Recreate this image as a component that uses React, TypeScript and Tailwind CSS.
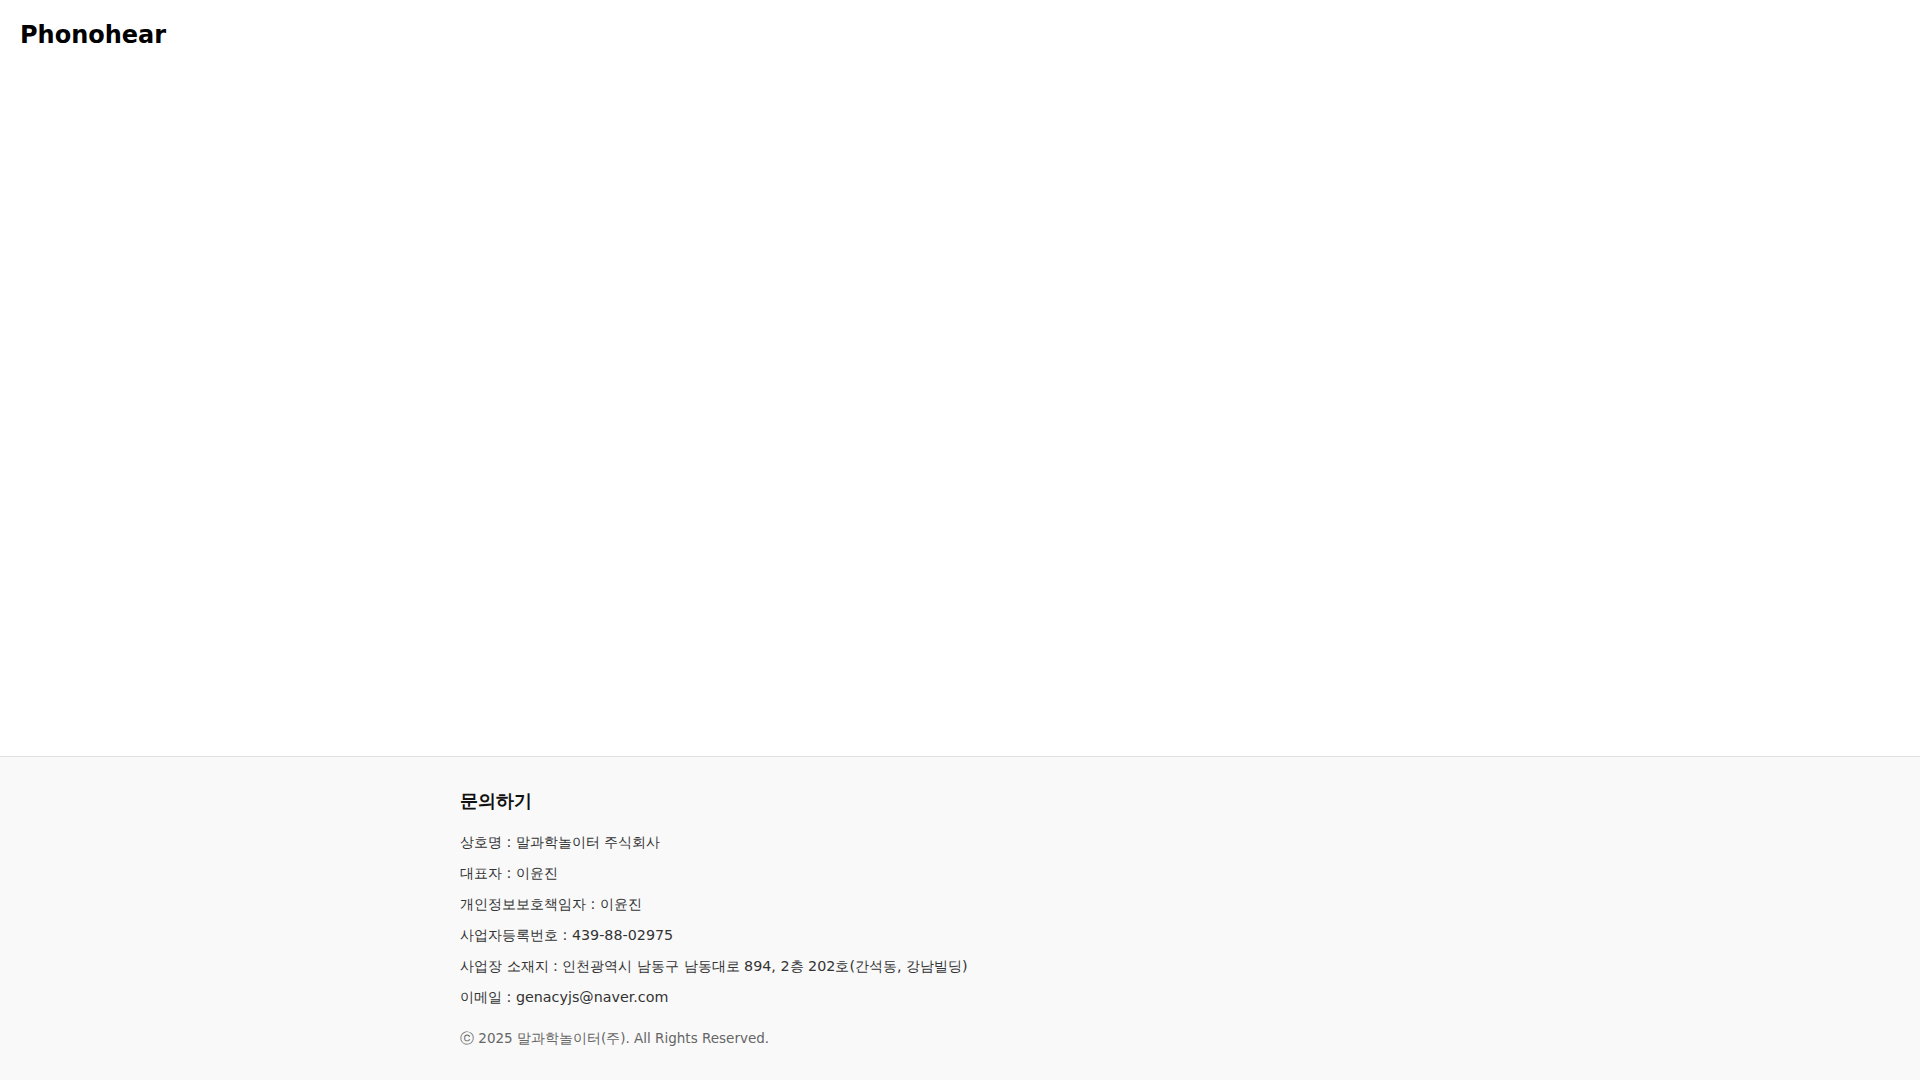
const rows = [
  "상호명 : 말과학놀이터 주식회사",
  "대표자 : 이윤진",
  "개인정보보호책임자 : 이윤진",
  "사업자등록번호 : 439-88-02975",
  "사업장 소재지 : 인천광역시 남동구 남동대로 894, 2층 202호(간석동, 강남빌딩)",
  "이메일 : genacyjs@naver.com",
];

export default function App() {
  return (
    <div className="min-h-screen flex flex-col bg-white font-['DejaVu_Sans',sans-serif]">
      <header className="px-5 pt-[19px]">
        <h1 className="text-2xl font-bold leading-8 text-black">Phonohear</h1>
      </header>
      <main className="flex-1" />
      <footer className="bg-[#f9f9f9] border-t border-[#e0e0e0]">
        <div className="mx-auto w-[1000px] pt-[30px] pb-8">
          <h2 className="text-[18px] font-bold leading-7 text-[#111]">문의하기</h2>
          <div className="mt-[17px] flex flex-col gap-[10px]">
            {rows.map((r) => (
              <p key={r} className="text-[14.3px] leading-[21px] text-[#333]">
                {r}
              </p>
            ))}
          </div>
          <p className="mt-5 text-[13.5px] leading-5 text-[#666]">
            ⓒ 2025 말과학놀이터(주). All Rights Reserved.
          </p>
        </div>
      </footer>
    </div>
  );
}
